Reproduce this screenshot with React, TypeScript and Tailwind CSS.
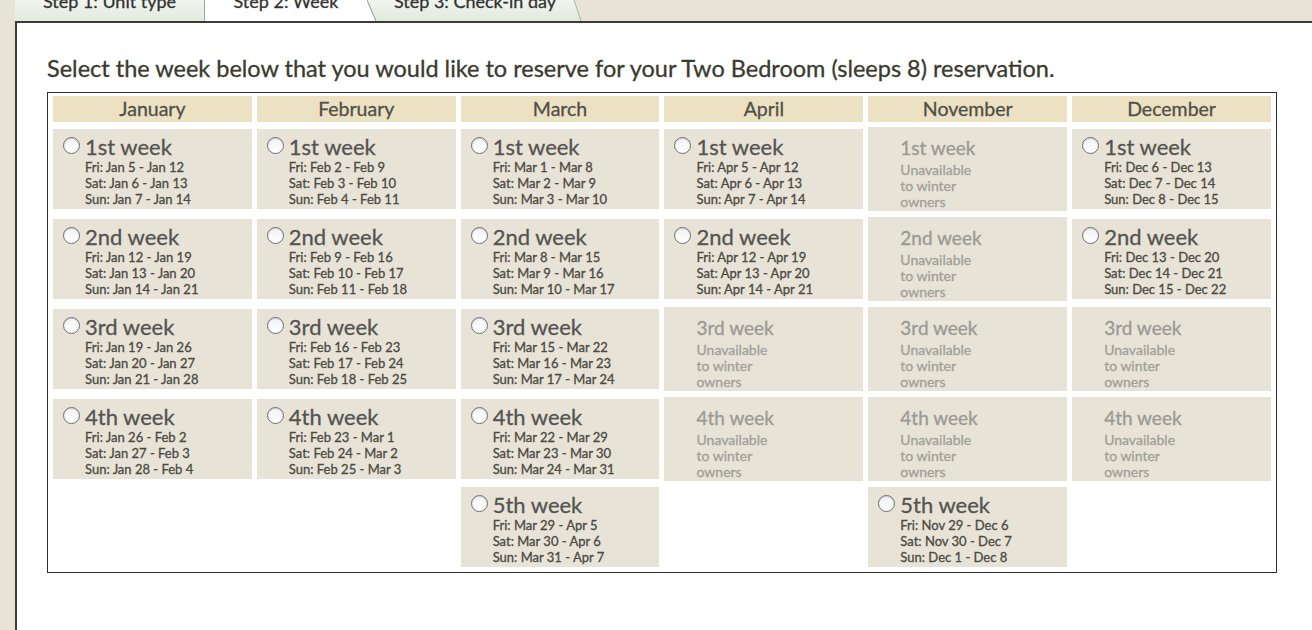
import React from "react";

type Week =
  | { label: string; avail: true; dates: [string, string, string] }
  | { label: string; avail: false }
  | null;

const d = (
  a: string,
  b: string,
  c: string
): [string, string, string] => [`Fri: ${a}`, `Sat: ${b}`, `Sun: ${c}`];

const months = ["January", "February", "March", "April", "November", "December"];

const U = (label: string): Week => ({ label, avail: false });
const A = (label: string, dates: [string, string, string]): Week => ({ label, avail: true, dates });

const columns: Week[][] = [
  [
    A("1st week", d("Jan 5 - Jan 12", "Jan 6 - Jan 13", "Jan 7 - Jan 14")),
    A("2nd week", d("Jan 12 - Jan 19", "Jan 13 - Jan 20", "Jan 14 - Jan 21")),
    A("3rd week", d("Jan 19 - Jan 26", "Jan 20 - Jan 27", "Jan 21 - Jan 28")),
    A("4th week", d("Jan 26 - Feb 2", "Jan 27 - Feb 3", "Jan 28 - Feb 4")),
    null,
  ],
  [
    A("1st week", d("Feb 2 - Feb 9", "Feb 3 - Feb 10", "Feb 4 - Feb 11")),
    A("2nd week", d("Feb 9 - Feb 16", "Feb 10 - Feb 17", "Feb 11 - Feb 18")),
    A("3rd week", d("Feb 16 - Feb 23", "Feb 17 - Feb 24", "Feb 18 - Feb 25")),
    A("4th week", d("Feb 23 - Mar 1", "Feb 24 - Mar 2", "Feb 25 - Mar 3")),
    null,
  ],
  [
    A("1st week", d("Mar 1 - Mar 8", "Mar 2 - Mar 9", "Mar 3 - Mar 10")),
    A("2nd week", d("Mar 8 - Mar 15", "Mar 9 - Mar 16", "Mar 10 - Mar 17")),
    A("3rd week", d("Mar 15 - Mar 22", "Mar 16 - Mar 23", "Mar 17 - Mar 24")),
    A("4th week", d("Mar 22 - Mar 29", "Mar 23 - Mar 30", "Mar 24 - Mar 31")),
    A("5th week", d("Mar 29 - Apr 5", "Mar 30 - Apr 6", "Mar 31 - Apr 7")),
  ],
  [
    A("1st week", d("Apr 5 - Apr 12", "Apr 6 - Apr 13", "Apr 7 - Apr 14")),
    A("2nd week", d("Apr 12 - Apr 19", "Apr 13 - Apr 20", "Apr 14 - Apr 21")),
    U("3rd week"),
    U("4th week"),
    null,
  ],
  [
    U("1st week"),
    U("2nd week"),
    U("3rd week"),
    U("4th week"),
    A("5th week", d("Nov 29 - Dec 6", "Nov 30 - Dec 7", "Dec 1 - Dec 8")),
  ],
  [
    A("1st week", d("Dec 6 - Dec 13", "Dec 7 - Dec 14", "Dec 8 - Dec 15")),
    A("2nd week", d("Dec 13 - Dec 20", "Dec 14 - Dec 21", "Dec 15 - Dec 22")),
    U("3rd week"),
    U("4th week"),
    null,
  ],
];

function Radio() {
  return (
    <span className="mt-[3px] block h-[17px] w-[17px] shrink-0 rounded-full border border-[#6f6f6f] bg-gradient-to-b from-[#f2f2f2] to-[#ffffff] shadow-[inset_0_1px_1px_rgba(0,0,0,0.15)]" />
  );
}

function Cell({ w }: { w: Week }) {
  if (!w) return <div />;
  if (w.avail) {
    return (
      <div className="flex h-[80px] bg-[#e8e3d7] pl-[10px] pt-[5px]">
        <Radio />
        <div className="ml-[5px]">
          <div className="text-[22px] leading-[25px] text-[#545450]">{w.label}</div>
          {w.dates.map((t) => (
            <div key={t} className="text-[13px] leading-[16px] text-[#4a4a42]">
              {t}
            </div>
          ))}
        </div>
      </div>
    );
  }
  return (
    <div className="h-[84px] bg-[#e8e3d7] pl-[32px] pt-[9px]">
      <div className="text-[19px] leading-[23px] text-[#9a9a93]">{w.label}</div>
      <div className="mt-[3px] text-[14px] leading-[16px] text-[#a09f98]">
        <div>Unavailable</div>
        <div>to winter</div>
        <div>owners</div>
      </div>
    </div>
  );
}

export default function App() {
  const rows = [0, 1, 2, 3, 4];
  return (
    <div
      className="flex h-[630px] w-[1312px] flex-col overflow-hidden bg-[#e8e3d7] pl-[15px] [-webkit-text-stroke:0.3px_currentColor]"
      style={{ fontFamily: "Lato, 'Noto Sans', sans-serif" }}
    >
      {/* tab bar */}
      <div className="flex h-[21px] shrink-0 overflow-hidden text-[18px] leading-[22px] text-[#333]">
        <div className="flex w-[190px] justify-center border-r border-[#9da59a] bg-gradient-to-b from-[#f1f5ee] to-[#e2eadd]">
          <span className="-mt-[10px]">Step 1: Unit type</span>
        </div>
        <div className="flex w-[162px] justify-center bg-white">
          <span className="-mt-[10px]">Step 2: Week</span>
        </div>
        <div className="relative flex w-[216px] justify-center">
          <svg className="absolute inset-0" width="216" height="21" viewBox="0 0 216 21">
            <defs>
              <linearGradient id="tg" x1="0" y1="0" x2="0" y2="1">
                <stop offset="0" stopColor="#f1f5ee" />
                <stop offset="1" stopColor="#e1e9dc" />
              </linearGradient>
            </defs>
            <polygon points="0,0 9,21 0,21" fill="#ffffff" />
            <polygon points="0,0 207,0 214,21 9,21" fill="url(#tg)" />
            <line x1="0" y1="0" x2="9" y2="21" stroke="#8f978c" strokeWidth="1" />
            <line x1="207" y1="0" x2="214" y2="21" stroke="#a9b1a6" strokeWidth="1" />
          </svg>
          <span className="relative -mt-[10px]">Step 3: Check-in day</span>
        </div>
      </div>

      {/* main panel */}
      <div className="flex-1 border-l-2 border-t-2 border-[#3c3c34] bg-white pl-[30px] pt-[31px]">
        <h1 className="text-[23.5px] leading-[28px] text-[#3a3a2d]">
          Select the week below that you would like to reserve for your Two Bedroom (sleeps 8) reservation.
        </h1>
        <div className="mt-[10px] w-[1230px] border border-[#2e2e2e] px-[5px] pb-[5px] pt-[3px]">
          <div className="mb-[5px] grid grid-cols-6 gap-x-[5px]">
            {months.map((m) => (
              <div
                key={m}
                className="h-[26px] bg-[#ece1c2] text-center text-[19.5px] leading-[26px] text-[#505049]"
              >
                {m}
              </div>
            ))}
          </div>
          <div className="grid grid-cols-6 items-center gap-x-[5px] gap-y-[6px]">
            {rows.map((r) =>
              columns.map((col, ci) => <Cell key={`${r}-${ci}`} w={col[r]} />)
            )}
          </div>
        </div>
      </div>
    </div>
  );
}
